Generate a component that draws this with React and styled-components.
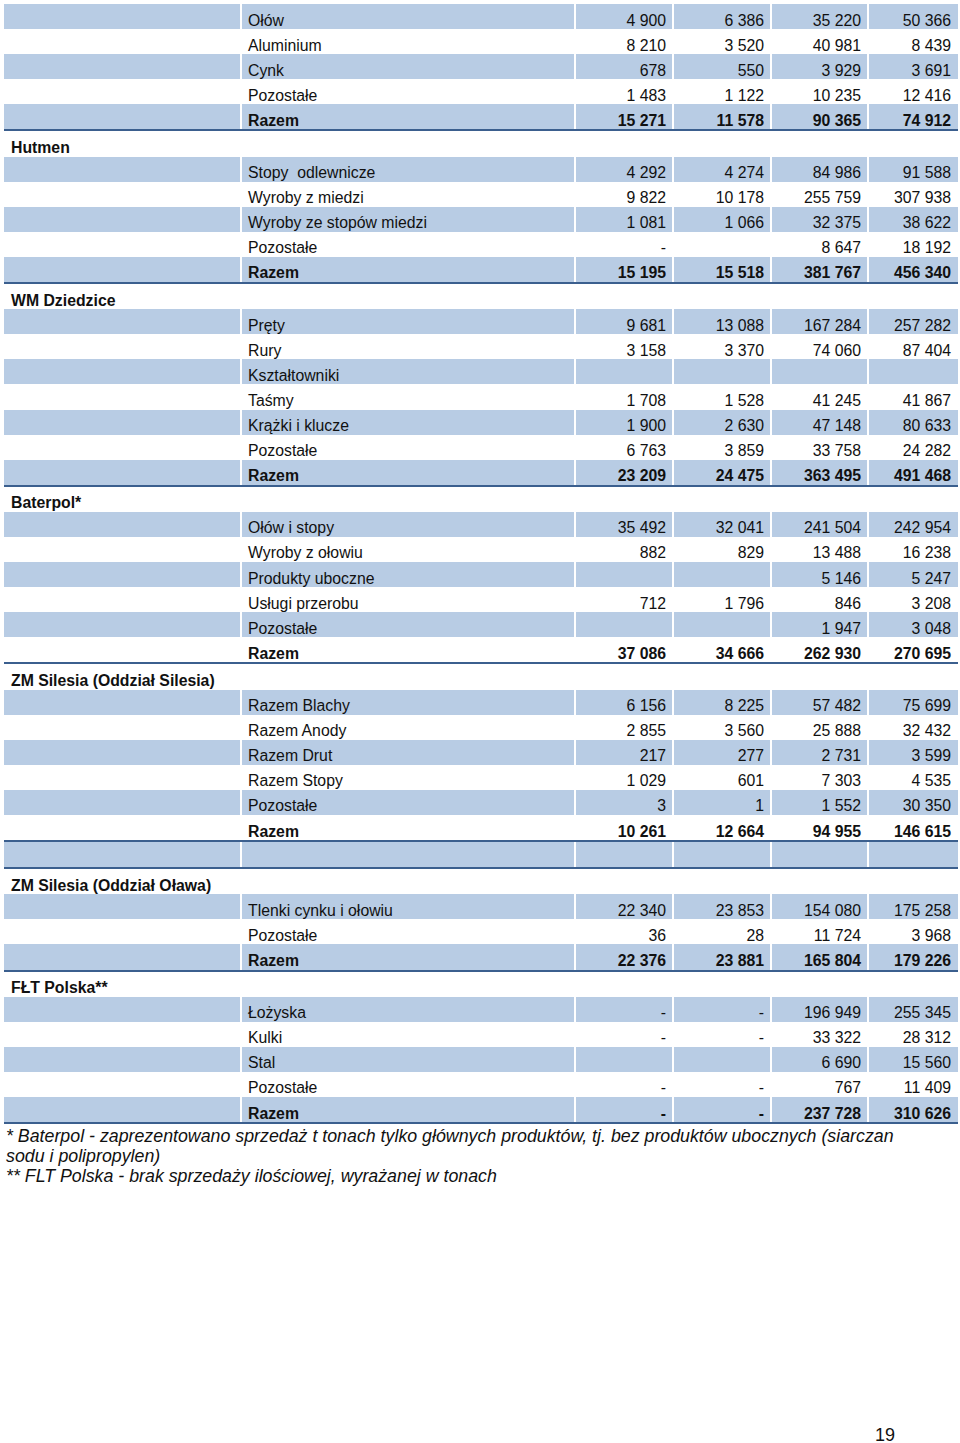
import styled, { createGlobalStyle } from "styled-components";

const GlobalStyle = createGlobalStyle`
  html, body {
    margin: 0;
    padding: 0;
    background: #fff;
  }
  body {
    font-family: "Liberation Sans", Arial, sans-serif;
    color: #111;
  }
`;

const blocks = [
  {
    rows: [
      ["Ołów", "4 900", "6 386", "35 220", "50 366"],
      ["Aluminium", "8 210", "3 520", "40 981", "8 439"],
      ["Cynk", "678", "550", "3 929", "3 691"],
      ["Pozostałe", "1 483", "1 122", "10 235", "12 416"],
      ["Razem", "15 271", "11 578", "90 365", "74 912"],
    ],
    name: "Hutmen",
  },
  {
    rows: [
      ["Stopy  odlewnicze", "4 292", "4 274", "84 986", "91 588"],
      ["Wyroby z miedzi", "9 822", "10 178", "255 759", "307 938"],
      ["Wyroby ze stopów miedzi", "1 081", "1 066", "32 375", "38 622"],
      ["Pozostałe", "-", "", "8 647", "18 192"],
      ["Razem", "15 195", "15 518", "381 767", "456 340"],
    ],
    name: "WM Dziedzice",
  },
  {
    rows: [
      ["Pręty", "9 681", "13 088", "167 284", "257 282"],
      ["Rury", "3 158", "3 370", "74 060", "87 404"],
      ["Kształtowniki", "", "", "", ""],
      ["Taśmy", "1 708", "1 528", "41 245", "41 867"],
      ["Krążki i klucze", "1 900", "2 630", "47 148", "80 633"],
      ["Pozostałe", "6 763", "3 859", "33 758", "24 282"],
      ["Razem", "23 209", "24 475", "363 495", "491 468"],
    ],
    name: "Baterpol*",
  },
  {
    rows: [
      ["Ołów i stopy", "35 492", "32 041", "241 504", "242 954"],
      ["Wyroby z ołowiu", "882", "829", "13 488", "16 238"],
      ["Produkty uboczne", "", "", "5 146", "5 247"],
      ["Usługi przerobu", "712", "1 796", "846", "3 208"],
      ["Pozostałe", "", "", "1 947", "3 048"],
      ["Razem", "37 086", "34 666", "262 930", "270 695"],
    ],
    name: "ZM Silesia (Oddział Silesia)",
  },
  {
    rows: [
      ["Razem Blachy", "6 156", "8 225", "57 482", "75 699"],
      ["Razem Anody", "2 855", "3 560", "25 888", "32 432"],
      ["Razem Drut", "217", "277", "2 731", "3 599"],
      ["Razem Stopy", "1 029", "601", "7 303", "4 535"],
      ["Pozostałe", "3", "1", "1 552", "30 350"],
      ["Razem", "10 261", "12 664", "94 955", "146 615"],
      ["", "", "", "", "", "empty"],
    ],
    name: "ZM Silesia (Oddział Oława)",
  },
  {
    rows: [
      ["Tlenki cynku i ołowiu", "22 340", "23 853", "154 080", "175 258"],
      ["Pozostałe", "36", "28", "11 724", "3 968"],
      ["Razem", "22 376", "23 881", "165 804", "179 226"],
    ],
    name: "FŁT Polska**",
  },
  {
    rows: [
      ["Łożyska", "-", "-", "196 949", "255 345"],
      ["Kulki", "-", "-", "33 322", "28 312"],
      ["Stal", "", "", "6 690", "15 560"],
      ["Pozostałe", "-", "-", "767", "11 409"],
      ["Razem", "-", "-", "237 728", "310 626"],
    ],
  },
];

const App = () => {
  return (
    <Page>
      <GlobalStyle />
      <Table>
        {blocks.map((block, bi) => (
          <Block key={bi}>
            {block.rows.map((r, ri) => {
              const total = r[0] === "Razem";
              const empty = r[5] === "empty";
              const band = empty || ri % 2 === 0;
              return (
                <Row key={ri} $band={band} $rule={total || empty}>
                  <Cell />
                  <Label $bold={total}>{r[0]}</Label>
                  {r.slice(1, 5).map((v, vi) => (
                    <Num key={vi} $bold={total}>
                      {v}
                    </Num>
                  ))}
                </Row>
              );
            })}
            {block.name && (
              <NameRow>
                <Name>{block.name}</Name>
              </NameRow>
            )}
          </Block>
        ))}
      </Table>
      <Notes>
        <p>
          * Baterpol - zaprezentowano sprzedaż t tonach tylko głównych
          produktów, tj. bez produktów ubocznych (siarczan sodu i
          polipropylen)
        </p>
        <p>** FLT Polska - brak sprzedaży ilościowej, wyrażanej w tonach</p>
      </Notes>
      <PageNo>19</PageNo>
    </Page>
  );
};

const Page = styled.div`
  min-height: 1443px;
  box-sizing: border-box;
  padding: 4px 2px 0 4px;
  display: flex;
  flex-direction: column;
`;

const Table = styled.div`
  width: 954px;
  display: flex;
  flex-direction: column;
`;

const Block = styled.div`
  display: flex;
  flex-direction: column;
`;

const Row = styled.div`
  display: grid;
  grid-template-columns: 236px 332px 96px 96px 95px 89px;
  column-gap: 2px;
  height: 25.1px;
  border-bottom: ${(p) => (p.$rule ? "2px solid #3b5f8e" : "none")};
  & > * {
    background: ${(p) => (p.$band ? "#b8cce4" : "transparent")};
  }
`;

const Cell = styled.div`
  box-sizing: border-box;
  height: 100%;
  padding-top: 7.5px;
  font-size: 15.8px;
  line-height: 18px;
  white-space: pre;
  overflow: hidden;
`;

const Label = styled(Cell)`
  padding-left: 6px;
  font-weight: ${(p) => (p.$bold ? 700 : 400)};
`;

const Num = styled(Cell)`
  text-align: right;
  padding-right: 6px;
  font-weight: ${(p) => (p.$bold ? 700 : 400)};
  &:last-child {
    padding-right: 7px;
  }
`;

const NameRow = styled.div`
  height: 25.1px;
  box-sizing: border-box;
  padding: 7.5px 0 0 7px;
`;

const Name = styled.div`
  font-size: 15.8px;
  line-height: 18px;
  font-weight: 700;
`;

const Notes = styled.div`
  width: 915px;
  padding: 2px 0 0 2px;
  font-size: 17.8px;
  line-height: 20px;
  font-style: italic;
  p {
    margin: 0;
  }
`;

const PageNo = styled.div`
  margin-top: auto;
  align-self: flex-end;
  margin-right: 63px;
  font-size: 18px;
  line-height: 16px;
`;

export default App;
